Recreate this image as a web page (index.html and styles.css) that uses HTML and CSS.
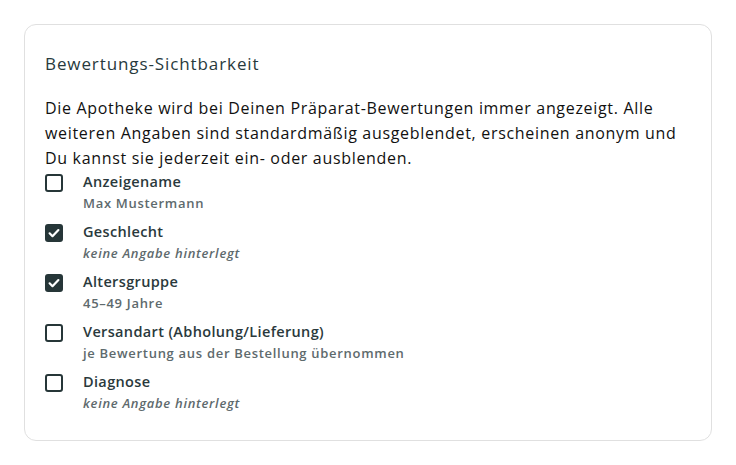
FILE: index.html
```html
<!DOCTYPE html>
<html lang="de">
<head>
<meta charset="utf-8">
<link rel="stylesheet" href="styles.css">
</head>
<body>
<section class="card">
  <h2 class="title">Bewertungs-Sichtbarkeit</h2>
  <p class="intro">Die Apotheke wird bei Deinen Präparat-Bewertungen immer angezeigt. Alle weiteren Angaben sind standardmäßig ausgeblendet, erscheinen anonym und Du kannst sie jederzeit ein- oder ausblenden.</p>
  <ul class="options">
    <li class="option">
      <span class="box"></span>
      <div class="text"><div class="label">Anzeigename</div><div class="sub">Max Mustermann</div></div>
    </li>
    <li class="option">
      <span class="box checked"><svg viewBox="0 0 18 18" width="18" height="18"><path d="M4.6 9.3l2.9 2.9 5.9-6.1" fill="none" stroke="#fff" stroke-width="2.2" stroke-linecap="round" stroke-linejoin="round"/></svg></span>
      <div class="text"><div class="label">Geschlecht</div><div class="sub em">keine Angabe hinterlegt</div></div>
    </li>
    <li class="option">
      <span class="box checked"><svg viewBox="0 0 18 18" width="18" height="18"><path d="M4.6 9.3l2.9 2.9 5.9-6.1" fill="none" stroke="#fff" stroke-width="2.2" stroke-linecap="round" stroke-linejoin="round"/></svg></span>
      <div class="text"><div class="label">Altersgruppe</div><div class="sub">45–49 Jahre</div></div>
    </li>
    <li class="option">
      <span class="box"></span>
      <div class="text"><div class="label">Versandart (Abholung/Lieferung)</div><div class="sub">je Bewertung aus der Bestellung übernommen</div></div>
    </li>
    <li class="option">
      <span class="box"></span>
      <div class="text"><div class="label">Diagnose</div><div class="sub em">keine Angabe hinterlegt</div></div>
    </li>
  </ul>
</section>
</body>
</html>
```

FILE: styles.css
```css
html, body {
  margin: 0;
  padding: 0;
  background: #fff;
}
body {
  font-family: "Open Sans", "Liberation Sans", sans-serif;
  color: #111;
}
.card {
  margin: 24px 24px 0 24px;
  width: 688px;
  height: 417px;
  box-sizing: border-box;
  border: 1px solid #e0e0e0;
  border-radius: 12px;
  padding: 27px 20px 0 20px;
}
.title {
  margin: 0;
  font-size: 17px;
  font-weight: 500;
  letter-spacing: 0.9px;
  line-height: 24px;
  color: #283a3d;
}
.intro {
  margin: 20px 0 0 0;
  font-size: 16px;
  letter-spacing: 0.68px;
  line-height: 25px;
  color: #111;
}
.options {
  list-style: none;
  margin: 1px 0 0 0;
  padding: 0;
  display: flex;
  flex-direction: column;
  gap: 8px;
}
.option {
  display: flex;
  align-items: flex-start;
  gap: 20px;
}
.box {
  width: 18px;
  height: 18px;
  box-sizing: border-box;
  border: 2px solid #263638;
  border-radius: 3px;
  margin-top: 2px;
  flex: none;
  display: flex;
}
.box.checked {
  background: #263638;
  border: none;
}
.label {
  font-size: 14.5px;
  font-weight: 600;
  letter-spacing: 0.35px;
  line-height: 20px;
  color: #2a393c;
}
.sub {
  font-size: 13px;
  font-weight: 600;
  letter-spacing: 0.7px;
  line-height: 22px;
  color: #5e6a6d;
}
.sub.em {
  font-style: italic;
}
```
